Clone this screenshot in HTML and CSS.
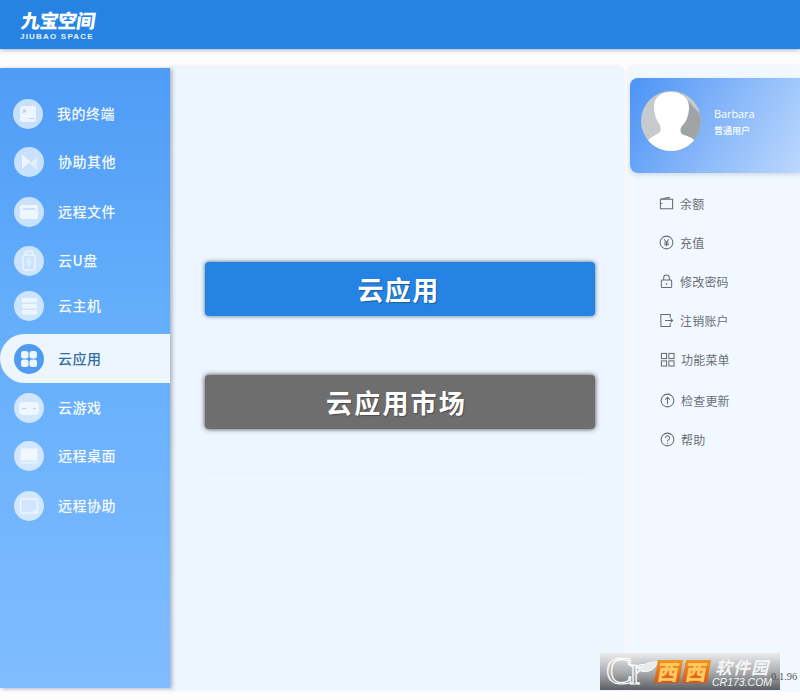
FILE: index.html
```html
<!DOCTYPE html>
<html lang="zh">
<head>
<meta charset="utf-8">
<title>九宝空间</title>
<link rel="stylesheet" href="styles.css">
</head>
<body>
<div class="app">
  <header class="topbar">
    <div class="logo">
      <div class="logo-cn">九宝空间</div>
      <div class="logo-en">JIUBAO SPACE</div>
    </div>
  </header>
  <div class="body-row">
    <nav class="sidebar">
      <a class="nav-item first"><span class="nav-icon"><svg viewBox="0 0 30 30" class="ni"><rect x="7" y="7" width="16" height="16" rx="2" fill="#fff" fill-opacity=".85"/><path d="M10 10.500l3 3m0-3l-3 3M16 19.500h5" stroke="#a9cdf8" stroke-width="1.200" fill="none"/></svg></span><span class="nav-label">我的终端</span></a>
      <a class="nav-item"><span class="nav-icon"><svg viewBox="0 0 30 30" class="ni"><path d="M8 7.500l8.500 7L8 21.500z" fill="#fff" fill-opacity=".9"/><path d="M23 10v13l-7.500-6.500z" fill="#fff" fill-opacity=".6"/></svg></span><span class="nav-label">协助其他</span></a>
      <a class="nav-item"><span class="nav-icon"><svg viewBox="0 0 30 30" class="ni"><rect x="6" y="8" width="18" height="14" rx="2" fill="#fff" fill-opacity=".85"/><path d="M9 12h12" stroke="#a9cdf8" stroke-width="1.200"/></svg></span><span class="nav-label">远程文件</span></a>
      <a class="nav-item"><span class="nav-icon"><svg viewBox="0 0 30 30" class="ni"><rect x="9" y="9" width="12" height="15" rx="2" fill="none" stroke="#fff" stroke-opacity=".8" stroke-width="1.500"/><path d="M11.500 9V5.500h7V9" fill="none" stroke="#fff" stroke-opacity=".8" stroke-width="1.500"/><path d="M15.500 12l-2 4h3l-2 4" fill="none" stroke="#fff" stroke-opacity=".8" stroke-width="1.200"/></svg></span><span class="nav-label">云U盘</span></a>
      <a class="nav-item"><span class="nav-icon"><svg viewBox="0 0 30 30" class="ni"><rect x="8" y="7" width="15" height="4.500" fill="#fff" fill-opacity=".8"/><rect x="8" y="13" width="15" height="4.500" fill="#fff" fill-opacity=".8"/><rect x="8" y="19" width="15" height="4.500" fill="#fff" fill-opacity=".8"/></svg></span><span class="nav-label">云主机</span></a>
      <a class="nav-item active"><span class="nav-icon"><svg viewBox="0 0 30 30" class="ni"><rect x="7" y="7" width="7.500" height="7.500" rx="2.500" fill="#fff" fill-opacity=".9"/><rect x="15.500" y="7" width="7.500" height="7.500" rx="2.500" fill="#fff" fill-opacity=".9"/><rect x="7" y="15.500" width="7.500" height="7.500" rx="2.500" fill="#fff" fill-opacity=".9"/><rect x="15.500" y="15.500" width="7.500" height="7.500" rx="2.500" fill="#fff" fill-opacity=".9"/></svg></span><span class="nav-label">云应用</span></a>
      <a class="nav-item"><span class="nav-icon"><svg viewBox="0 0 30 30" class="ni"><rect x="5" y="9" width="20" height="13" rx="4" fill="#fff" fill-opacity=".85"/><path d="M8 15.500h4M19 15.500h3" stroke="#a9cdf8" stroke-width="1.200"/></svg></span><span class="nav-label">云游戏</span></a>
      <a class="nav-item"><span class="nav-icon"><svg viewBox="0 0 30 30" class="ni"><rect x="6.500" y="7.500" width="17" height="12" fill="#fff" fill-opacity=".85"/><rect x="6.500" y="21" width="17" height="1.500" fill="#fff" fill-opacity=".7"/></svg></span><span class="nav-label">远程桌面</span></a>
      <a class="nav-item"><span class="nav-icon"><svg viewBox="0 0 30 30" class="ni"><rect x="6.500" y="8" width="17" height="14" rx="1" fill="none" stroke="#fff" stroke-opacity=".8" stroke-width="1.500"/><path d="M19 19l3 3M22 19v3h-3" fill="none" stroke="#fff" stroke-opacity=".8" stroke-width="1.200"/></svg></span><span class="nav-label">远程协助</span></a>
    </nav>
    <main class="content">
      <button class="big-btn blue">云应用</button>
      <button class="big-btn gray">云应用市场</button>
      <div class="divider"></div>
    </main>
    <aside class="side">
      <div class="profile">
        <svg class="avatar" viewBox="0 0 62 62">
          <defs><clipPath id="avc"><circle cx="31" cy="31" r="30"/></clipPath></defs>
          <circle cx="31" cy="31" r="30" fill="#c6cacd"/>
          <g clip-path="url(#avc)">
            <path d="M40 2L62 26V62H40L31 31z" fill="#a0a4a7"/>
            <path d="M31 2c-11 0-17 6-17 15 0 7 2 13 6 18 1 3 1 6-1 8-3 2-9 4-12 9-1 2 0 10 0 10h50s1-7-1-10c-3-5-10-6-14-8-2-2-2-6 0-8 5-5 7-12 7-19 0-9-7-15-18-15z" fill="#fff"/>
          </g>
        </svg>
        <div class="who">
          <div class="who-name">Barbara</div>
          <div class="who-role">普通用户</div>
        </div>
      </div>
      <ul class="menu">
        <li class="menu-row"><svg class="mi" viewBox="0 0 16 16"><path d="M1.500 3.500l9-2 1 2h3v10h-13zM1.500 3.500h10M1.500 8h2" /></svg><span>余额</span></li>
        <li class="menu-row"><svg class="mi" viewBox="0 0 16 16"><circle cx="8" cy="8" r="6.800"/><path d="M5.500 4.500L8 8l2.500-3.500M8 8v4M5.500 8.500h5M5.500 10.500h5"/></svg><span>充值</span></li>
        <li class="menu-row"><svg class="mi" viewBox="0 0 16 16"><rect x="2.500" y="6.500" width="11" height="8" rx="1"/><path d="M5 6.500V4a3 3 0 0 1 6 0v2.500M8 9.500v2"/></svg><span>修改密码</span></li>
        <li class="menu-row"><svg class="mi" viewBox="0 0 16 16"><path d="M12 5V1.500H2v13h10V11M6.500 8h8M12.500 6l2 2-2 2"/></svg><span>注销账户</span></li>
        <li class="menu-row shift"><svg class="mi" viewBox="0 0 16 16"><rect x="1.500" y="1.500" width="5.500" height="5.500"/><rect x="9.500" y="1.500" width="5.500" height="5.500"/><rect x="1.500" y="9.500" width="5.500" height="5.500"/><rect x="9.500" y="9.500" width="5.500" height="5.500"/></svg><span>功能菜单</span></li>
        <li class="menu-row shift"><svg class="mi" viewBox="0 0 16 16"><circle cx="8" cy="8" r="6.800"/><path d="M8 12V4.500M5.500 7L8 4.500 10.500 7"/></svg><span>检查更新</span></li>
        <li class="menu-row shift"><svg class="mi" viewBox="0 0 16 16"><circle cx="8" cy="8" r="6.800"/><path d="M5.800 6.300a2.200 2.200 0 1 1 3.400 1.900c-.8.500-1.200 1-1.200 1.800M8 11.500v1"/></svg><span>帮助</span></li>
      </ul>
    </aside>
  </div>
  <div class="watermark">
    <span class="wm-c">Cr</span>
    <svg class="wm-leaf" viewBox="0 0 22 14"><path d="M1 13C2 6 9 1 21 1c-1 7-8 11-16 9" fill="#e8eaec" stroke="#fff" stroke-width="1"/></svg>
    <span class="wm-xi">西</span>
    <span class="wm-xi">西</span>
    <span class="wm-right">
      <span class="wm-soft">软件园</span>
      <span class="wm-url">CR173.COM</span>
    </span>
  </div>
  <div class="version">0.1.96</div>
</div>
</body>
</html>
```

FILE: styles.css
```css
* { box-sizing: border-box; }
html, body { margin: 0; padding: 0; }
body {
  width: 800px;
  height: 700px;
  overflow: hidden;
  background: #fdfdfe;
  font-family: "Noto Sans CJK SC", "Noto Sans", sans-serif;
}
.app { position: relative; width: 800px; height: 700px; overflow: hidden; }

.topbar {
  height: 49px;
  background: #2683e4;
  box-shadow: 0 1px 4px rgba(60, 80, 110, .45);
  padding: 9px 0 0 20px;
  position: relative;
}
.logo { width: 76px; color: #fff; }
.logo-cn {
  font-size: 19px;
  line-height: 21px;
  font-weight: 900;
  letter-spacing: -.6px;
  transform: skewX(-8deg);
  transform-origin: left bottom;
  white-space: nowrap;
}
.logo-en {
  font-family: "Liberation Sans", sans-serif;
  font-size: 8px;
  font-weight: 700;
  line-height: 9px;
  letter-spacing: 1.200px;
  margin-top: 2px;
  white-space: nowrap;
  color: #e6f1fd;
}

.body-row {
  display: flex;
  align-items: flex-start;
  height: 624px;
  padding-top: 17px;
}
.sidebar {
  width: 170px;
  height: 620px;
  margin-top: 2px;
  padding-top: 31px;
  background: linear-gradient(180deg, #4f9cf6 0%, #64aefb 40%, #80bcff 100%);
  box-shadow: 2px 1px 4px rgba(60, 70, 90, .4);
  position: relative;
  z-index: 1;
  flex: none;
}
.nav-item {
  display: flex;
  align-items: center;
  height: 30px;
  padding-left: 14px;
  margin-top: 19px;
  color: #fff;
}
.nav-item.first { margin-top: 0; padding-left: 13px; }
.nav-item:nth-child(2) { margin-top: 18px; }
.nav-item:nth-child(3) { margin-top: 20px; }
.nav-item:nth-child(4) { margin-top: 19px; }
.nav-item:nth-child(5) { margin-top: 15px; }
.nav-item:nth-child(7) { margin-top: 10px; }
.nav-item:nth-child(8) { margin-top: 18px; }
.nav-item:nth-child(9) { margin-top: 20px; }
.nav-item.active {
  height: 49px;
  margin-top: 13px;
  background: #edf5fe;
  border-radius: 25px 0 0 25px;
  color: #27689f;
}
.nav-icon {
  width: 30px;
  height: 30px;
  border-radius: 50%;
  background: rgba(255, 255, 255, .68);
  flex: none;
  margin-right: 14px;
  display: flex;
}
.active .nav-icon { background: #4d9bf3; }
.ni { width: 30px; height: 30px; opacity: .8; }
.active .ni { opacity: 1; }
.nav-label {
  font-size: 14px;
  font-weight: 500;
  letter-spacing: .5px;
  white-space: nowrap;
  opacity: .95;
  padding-bottom: 2px;
}

.content {
  width: 454px;
  height: 624px;
  flex: none;
  background: #edf5fe;
  border-radius: 0 6px 0 0;
  padding: 196px 29px 0 35px;
  box-shadow: 0 0 3px rgba(160, 180, 210, .25);
}
.big-btn {
  display: block;
  width: 390px;
  height: 54px;
  border: 0;
  border-radius: 4px;
  color: #fff;
  font-family: inherit;
  font-size: 26px;
  font-weight: 700;
  letter-spacing: 1.300px;
  line-height: 54px;
  padding: 0 3px 2px 0;
  text-shadow: 1px 1px 1px rgba(0, 0, 0, .3);
}
.big-btn.blue {
  background: #2583e3;
  box-shadow: 0 0 4px rgba(30, 70, 120, .8);
  margin-bottom: 59px;
}
.big-btn.gray {
  background: #6e6e6e;
  box-shadow: 0 0 5px rgba(30, 30, 30, .85);
  letter-spacing: 2.200px;
  padding-right: 7px;
}
.divider {
  width: 377px;
  height: 1px;
  margin: 44px 0 0 3px;
  background: #e8f0f9;
}

.side {
  width: 172px;
  height: 624px;
  flex: none;
  margin-left: 4px;
  padding: 12px 0 0 2px;
  background: #f2f8ff;
  border-radius: 6px 0 0 0;
  box-shadow: 0 0 3px rgba(160, 180, 210, .25);
}
.profile {
  display: flex;
  align-items: flex-start;
  width: 170px;
  height: 95px;
  padding: 12px 0 0 10px;
  border-radius: 8px 0 0 8px;
  background: linear-gradient(120deg, #4c93f6 0%, #86b6f9 50%, #bcd8fd 100%);
  box-shadow: 0 2px 5px rgba(120, 150, 190, .3);
}
.avatar { width: 62px; height: 62px; flex: none; }
.who { margin: 16px 0 0 12px; color: #fff; }
.who-name {
  font-family: "Open Sans", sans-serif;
  font-size: 11px;
  line-height: 16px;
  letter-spacing: -.1px;
}
.who-role { font-size: 9px; line-height: 13px; margin-top: 2px; font-weight: 500; }

.menu {
  list-style: none;
  margin: 21px 0 0;
  padding: 0 0 0 29px;
  color: #6b6f75;
}
.menu-row {
  display: flex;
  align-items: center;
  height: 18px;
  margin-bottom: 21px;
  font-size: 12px;
  letter-spacing: .2px;
  white-space: nowrap;
}
.menu-row:nth-child(5) { margin-bottom: 23px; }
.menu-row.shift { padding-left: 1px; }
.mi {
  width: 15px;
  height: 15px;
  flex: none;
  margin-right: 6px;
  fill: none;
  stroke: #666b72;
  stroke-width: 1.100;
}

.version {
  position: absolute;
  left: 771px;
  top: 670px;
  font-family: "Liberation Serif", serif;
  font-size: 10.500px;
  line-height: 14px;
  color: #555;
}
.watermark {
  position: absolute;
  left: 600px;
  top: 653px;
  width: 180px;
  height: 37px;
  background: linear-gradient(180deg, #ececed 0%, #a5a7a9 55%, #5c5f62 100%);
  overflow: hidden;
}
.wm-c {
  position: absolute;
  left: 6px;
  top: 0;
  font-family: "Liberation Serif", serif;
  font-size: 40px;
  line-height: 36px;
  letter-spacing: -3px;
  color: rgba(255, 255, 255, .15);
  -webkit-text-stroke: 1.200px #fff;
}
.wm-leaf {
  position: absolute;
  left: 36px;
  top: 8px;
  width: 22px;
  height: 14px;
}
.wm-xi {
  position: absolute;
  top: 7px;
  left: 56px;
  width: 25px;
  height: 23px;
  font-size: 21px;
  line-height: 23px;
  font-weight: 900;
  text-align: center;
  color: #ffc860;
  background: linear-gradient(180deg, #f2951f 0%, #dc5515 100%);
  transform: skewX(-10deg);
}
.wm-xi + .wm-xi { left: 84px; }
.wm-right {
  position: absolute;
  left: 112px;
  top: 5px;
  display: flex;
  flex-direction: column;
  color: #f4f5f6;
}
.wm-soft {
  font-size: 17px;
  line-height: 18px;
  font-weight: 700;
  font-style: italic;
  letter-spacing: 1px;
  margin-left: 3px;
  white-space: nowrap;
}
.wm-url {
  font-family: "Liberation Sans", sans-serif;
  font-size: 10.500px;
  line-height: 12px;
  font-style: italic;
  white-space: nowrap;
}
```
